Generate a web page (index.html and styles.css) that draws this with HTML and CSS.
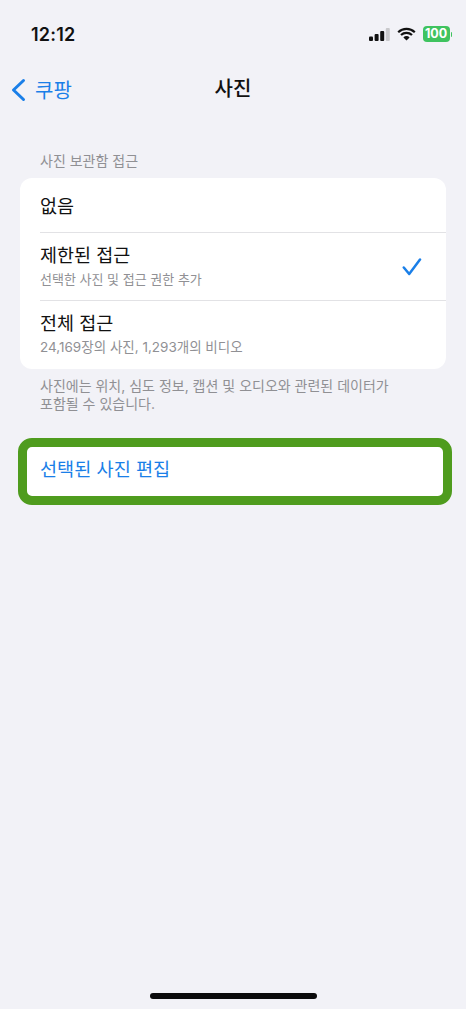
FILE: index.html
```html
<!DOCTYPE html>
<html lang="ko">
<head>
<meta charset="utf-8">
<title>사진</title>
<link rel="stylesheet" href="styles.css">
</head>
<body>
<div class="screen">
  <header class="status">
    <span class="time">12:12</span>
    <div class="status-icons">
      <svg class="signal" width="21" height="13" viewBox="0 0 21 13"><rect x="0" y="8.5" width="4" height="4.5" rx="1" fill="#111"/><rect x="5.6" y="6" width="4" height="7" rx="1" fill="#111"/><rect x="11.2" y="3" width="4" height="10" rx="1" fill="#111"/><rect x="16.8" y="0" width="4" height="13" rx="1" fill="#c9c9cc"/></svg>
      <svg class="wifi" width="19" height="14" viewBox="0 0 19 14"><path d="M1.2 5.2a12 12 0 0 1 16.6 0M4 8a8 8 0 0 1 11 0" fill="none" stroke="#111" stroke-width="2.2"/><path d="M9.5 13.6 6.4 10.4a4.4 4.4 0 0 1 6.2 0z" fill="#111"/></svg>
      <div class="battery"><span class="battery-body">100</span><span class="battery-cap"></span></div>
    </div>
  </header>
  <nav class="nav">
    <div class="back">
      <svg width="16" height="24" viewBox="0 0 16 24"><path d="M13.5 2.5 3.5 12l10 9.5" fill="none" stroke="#1a7fe8" stroke-width="3" stroke-linecap="round" stroke-linejoin="round"/></svg>
      <span>쿠팡</span>
    </div>
    <h1 class="title">사진</h1>
  </nav>
  <main class="content">
    <p class="section-label">사진 보관함 접근</p>
    <section class="card">
      <div class="row row-single"><span class="row-title">없음</span></div>
      <div class="row row-double">
        <div class="row-text"><span class="row-title">제한된 접근</span><span class="row-sub row-sub-tight">선택한 사진 및 접근 권한 추가</span></div>
        <svg class="check" width="20" height="18" viewBox="0 0 20 18"><path d="M1.8 9.5 7.2 16 18 1.6" fill="none" stroke="#1a7fe8" stroke-width="2.5" stroke-linecap="round" stroke-linejoin="round"/></svg>
      </div>
      <div class="row row-double row-last">
        <div class="row-text"><span class="row-title">전체 접근</span><span class="row-sub">24,169장의 사진, 1,293개의 비디오</span></div>
      </div>
    </section>
    <p class="footnote">사진에는 위치, 심도 정보, 캡션 및 오디오와 관련된 데이터가<br>포함될 수 있습니다.</p>
    <div class="highlight"><span class="action">선택된 사진 편집</span></div>
  </main>
  <div class="home-indicator"></div>
</div>
</body>
</html>
```
FILE: styles.css
```css
* { box-sizing: border-box; }
html, body { margin: 0; padding: 0; }
body {
  background: #f2f2f7;
  font-family: "Inter", "Noto Sans CJK KR", sans-serif;
  color: #111;
}
.screen {
  width: 466px;
  height: 1009px;
  display: flex;
  flex-direction: column;
  overflow: hidden;
  position: relative;
}
.status {
  height: 68px;
  flex: none;
  display: flex;
  justify-content: space-between;
  align-items: center;
  padding: 0 14px 0 31px;
}
.time { font-size: 18px; font-weight: 600; letter-spacing: 0.2px; }
.status-icons { display: flex; align-items: center; gap: 7px; }
.battery { display: flex; align-items: center; gap: 1px; }
.battery-body {
  width: 27px;
  height: 16px;
  background: #3fc35f;
  color: #fff;
  border-radius: 4px;
  font-size: 12.5px;
  font-weight: 700;
  line-height: 16px;
  text-align: center;
}
.battery-cap { width: 1.5px; height: 5px; background: #3fc35f; border-radius: 0 1px 1px 0; }
.nav {
  height: 42px;
  flex: none;
  display: flex;
  align-items: center;
  justify-content: center;
  position: relative;
  padding-bottom: 4px;
}
.back {
  position: absolute;
  left: 10px;
  top: 7px;
  display: flex;
  align-items: center;
  gap: 9px;
  color: #1a7fe8;
  font-size: 20px;
}
.title { margin: 0; font-size: 20px; font-weight: 500; }
.content { padding: 0 20px; flex: 1; }
.section-label {
  margin: 42px 0 0 20px;
  height: 18px;
  font-size: 14px;
  line-height: 18px;
  color: #909094;
}
.card {
  margin-top: 8px;
  background: #fff;
  border-radius: 12px;
  padding-left: 20px;
}
.row { display: flex; align-items: center; justify-content: space-between; }
.row + .row { border-top: 1px solid #e2e2e5; }
.row-single { height: 54px; padding-top: 2px; }
.row-double { height: 68px; }
.row-last { height: 69px; padding-bottom: 1px; }
.row-text { display: flex; flex-direction: column; gap: 2px; padding-bottom: 2px; }
.row-title { font-size: 18.5px; line-height: 26px; }
.row-sub { font-size: 13.5px; line-height: 19px; color: #909094; }
.row-sub-tight { font-size: 13px; }
.check { margin-right: 24px; }
.footnote {
  margin: 8px 0 0 20px;
  font-size: 14px;
  line-height: 17.5px;
  color: #909094;
}
.highlight {
  margin: 26px -6px 0 -2px;
  height: 67px;
  background: #fff;
  border: 9px solid #4f9c1e;
  border-radius: 14px;
  padding-left: 13px;
  padding-bottom: 8px;
  display: flex;
  align-items: center;
}
.action { font-size: 18.6px; color: #1a7fe8; }
.home-indicator {
  position: absolute;
  left: 150px;
  bottom: 10px;
  width: 167px;
  height: 6px;
  border-radius: 3px;
  background: #0b0b0c;
}
```
